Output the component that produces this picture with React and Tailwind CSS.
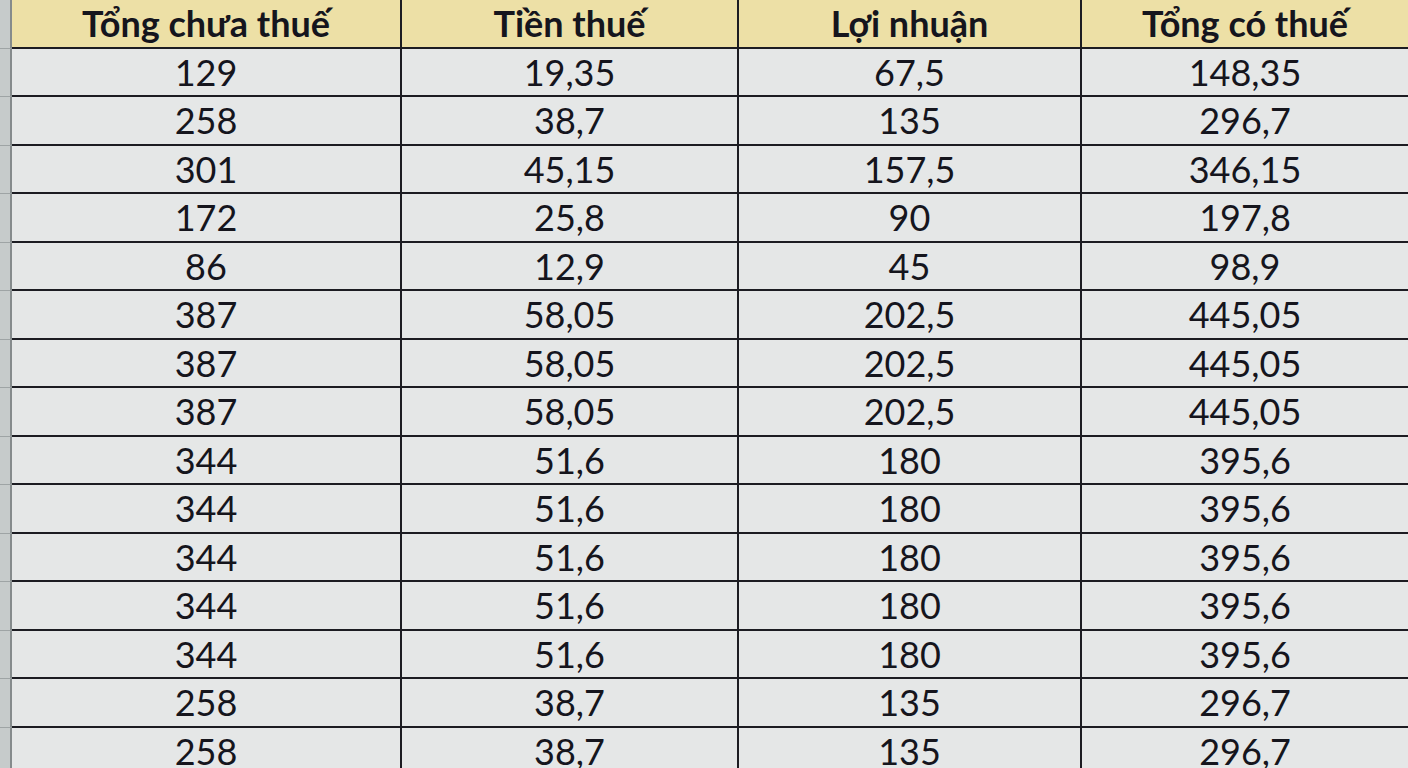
import React from "react";

const rows = [
  ["129", "19,35", "67,5", "148,35"],
  ["258", "38,7", "135", "296,7"],
  ["301", "45,15", "157,5", "346,15"],
  ["172", "25,8", "90", "197,8"],
  ["86", "12,9", "45", "98,9"],
  ["387", "58,05", "202,5", "445,05"],
  ["387", "58,05", "202,5", "445,05"],
  ["387", "58,05", "202,5", "445,05"],
  ["344", "51,6", "180", "395,6"],
  ["344", "51,6", "180", "395,6"],
  ["344", "51,6", "180", "395,6"],
  ["344", "51,6", "180", "395,6"],
  ["344", "51,6", "180", "395,6"],
  ["258", "38,7", "135", "296,7"],
  ["258", "38,7", "135", "296,7"],
];

const headers = ["Tổng chưa thuế", "Tiền thuế", "Lợi nhuận", "Tổng có thuế"];
const widths = ["w-[388px]", "w-[337px]", "w-[343px]", "flex-1"];

const Row = ({ cells, header }) => (
  <div className="flex h-[48.5px] shrink-0">
    <div className="w-[12px] shrink-0 bg-[#c6cbcb] border-r-2 border-r-[#858b8c] border-b border-b-[#9ea4a5]"></div>
    {cells.map((c, i) => (
      <div
        key={i}
        className={`${widths[i]} shrink-0 flex items-center justify-center border-b-2 border-b-[#1c1c22] ${
          i > 0 ? "border-l-2 border-l-[#1c1c22]" : ""
        } ${header ? "bg-[#ede0a6] font-bold" : "bg-[#e5e7e7]"}`}
      >
        <span className="leading-none">{c}</span>
      </div>
    ))}
  </div>
);

export default function App() {
  return (
    <div
      className="w-[1408px] h-[768px] overflow-hidden flex flex-col bg-[#e5e7e7] text-[#15151d] text-[36px]"
      style={{ fontFamily: "Lato, 'Open Sans', sans-serif" }}
    >
      <Row cells={headers} header />
      {rows.map((r, i) => (
        <Row key={i} cells={r} />
      ))}
    </div>
  );
}
